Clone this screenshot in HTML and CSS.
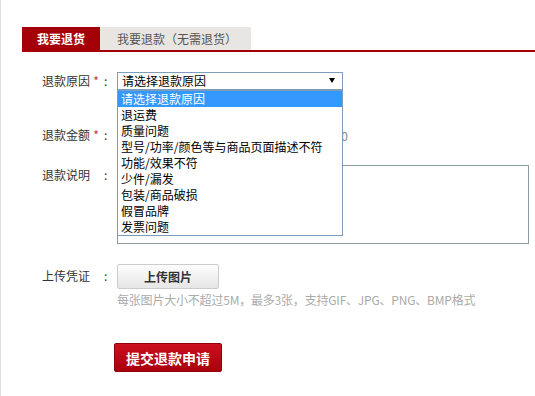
FILE: index.html
```html
<!DOCTYPE html>
<html lang="zh-CN">
<head>
    <meta charset="UTF-8">
    <meta name="viewport" content="width=device-width, initial-scale=1.0">
    <title>申请退款</title>
    <link rel="stylesheet" href="styles.css">
</head>
<body>
    <div class="panel">
        <!-- Tabs -->
        <div class="tabs">
            <div class="tab active">我要退货</div>
            <div class="tab">我要退款（无需退货）</div>
        </div>

        <!-- Refund form -->
        <div class="form">
            <div class="row">
                <div class="label">退款原因<span class="star">*</span><span class="colon">:</span></div>
                <div class="field">
                    <div class="select">
                        <span>请选择退款原因</span>
                        <span class="arrow"></span>
                        <ul class="options">
                            <li class="selected">请选择退款原因</li>
                            <li>退运费</li>
                            <li>质量问题</li>
                            <li>型号/功率/颜色等与商品页面描述不符</li>
                            <li>功能/效果不符</li>
                            <li>少件/漏发</li>
                            <li>包装/商品破损</li>
                            <li>假冒品牌</li>
                            <li>发票问题</li>
                        </ul>
                    </div>
                </div>
            </div>

            <div class="row row-amount">
                <div class="label">退款金额<span class="star">*</span><span class="colon">:</span></div>
                <div class="field field-inline">
                    <input class="amount" type="text">
                    <span class="amount-tip">最多可退￥200</span>
                </div>
            </div>

            <div class="row row-desc">
                <div class="label">退款说明<span class="star"></span><span class="colon">:</span></div>
                <div class="field">
                    <textarea class="desc"></textarea>
                </div>
            </div>

            <div class="row row-upload">
                <div class="label">上传凭证<span class="star"></span><span class="colon">:</span></div>
                <div class="field">
                    <button class="upload-btn">上传图片</button>
                    <div class="hint">每张图片大小不超过5M，最多3张，支持GIF、JPG、PNG、BMP格式</div>
                </div>
            </div>

            <div class="submit-row">
                <button class="submit-btn">提交退款申请</button>
            </div>
        </div>
    </div>
</body>
</html>
```

FILE: styles.css
```css
/* Refund application page */
body {
    margin: 0;
    font-family: "Noto Sans CJK SC", "Liberation Sans", sans-serif;
    font-size: 12px;
    color: #333;
    background: #fff;
}

.panel {
    border-left: 1px solid #ddd;
    min-height: 396px;
    box-sizing: border-box;
    padding: 27px 0 0 21px;
}

.tabs {
    display: flex;
    border-bottom: 2px solid #a50008;
}

.tab {
    height: 23px;
    line-height: 23px;
    padding: 0 14px 0 17px;
    background: #e9e5e2;
    color: #555;
}

.tab.active {
    width: 78px;
    box-sizing: border-box;
    padding: 0;
    text-align: center;
    background: #a50008;
    color: #fff;
    font-weight: bold;
}

.form {
    padding-left: 20px;
}

.row {
    display: flex;
    align-items: flex-start;
    margin-top: 20px;
}

.row-amount {
    margin-top: 36px;
}

.row-desc {
    margin-top: 21px;
}

.label {
    width: 75px;
    line-height: 18px;
    display: flex;
}

.star {
    color: #c33;
    width: 12px;
    text-align: center;
}

.colon {
    margin-left: 2px;
}

.row-desc .label {
    line-height: 20px;
}

.row-upload .label {
    line-height: 23px;
}

.field-inline {
    display: flex;
    align-items: flex-start;
    height: 18px;
}

/* Reason select with its open list */
.select {
    position: relative;
    width: 226px;
    height: 18px;
    box-sizing: border-box;
    border: 1px solid #7f9db9;
    line-height: 16px;
    padding-left: 4px;
    color: #000;
    background: #fff;
}

.arrow {
    position: absolute;
    right: 7px;
    top: 5px;
    width: 0;
    height: 0;
    border-left: 3px solid transparent;
    border-right: 3px solid transparent;
    border-top: 5px solid #000;
}

.options {
    position: absolute;
    top: 17px;
    left: -1px;
    width: 226px;
    box-sizing: border-box;
    margin: 0;
    padding: 0;
    list-style: none;
    border: 1px solid #7f9db9;
    background: #fff;
    z-index: 2;
}

.options li {
    height: 16px;
    line-height: 16px;
    padding-left: 3px;
    color: #000;
    white-space: nowrap;
}

.options li.selected {
    background: #3399ff;
    color: #fff;
}

.amount {
    width: 143px;
    height: 18px;
    box-sizing: border-box;
    border: 1px solid #8c99a6;
    margin: 0;
}

.amount-tip {
    margin-left: 8px;
    line-height: 20px;
    color: #888;
}

.desc {
    display: block;
    width: 412px;
    height: 79px;
    box-sizing: border-box;
    border: 1px solid #8c99a6;
    margin: 0;
    resize: none;
}

.upload-btn {
    display: block;
    width: 102px;
    height: 25px;
    margin: 0;
    padding: 0;
    border: 1px solid #ccc;
    border-radius: 2px;
    background: linear-gradient(#fdfdfd, #e6e6e6);
    font-family: inherit;
    font-size: 12px;
    font-weight: bold;
    color: #333;
}

.hint {
    margin-top: 4px;
    line-height: 14px;
    color: #aaa;
    letter-spacing: -0.2px;
    white-space: nowrap;
}

.submit-row {
    margin-top: 36px;
    padding-left: 72px;
}

.submit-btn {
    width: 108px;
    height: 29px;
    padding: 0;
    border: 1px solid #8f0008;
    border-radius: 2px;
    background: linear-gradient(#cc1020, #a8000c);
    font-family: inherit;
    font-size: 14px;
    font-weight: bold;
    color: #fff;
}
```
